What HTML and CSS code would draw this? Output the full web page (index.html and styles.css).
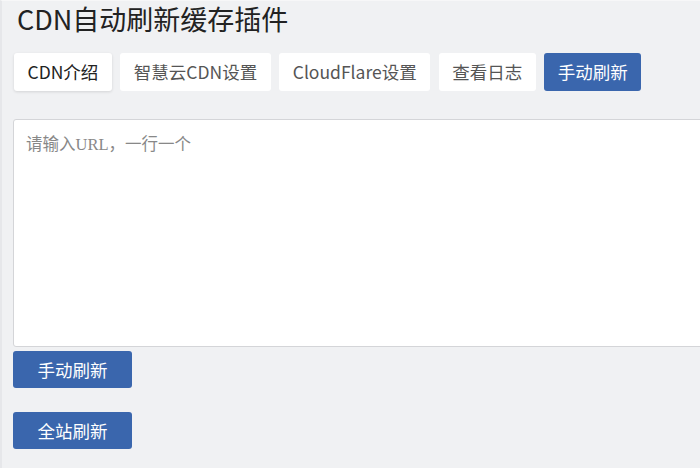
FILE: index.html
```html
<!DOCTYPE html>
<html lang="zh-CN">
<head>
  <meta charset="UTF-8">
  <title>CDN自动刷新缓存插件</title>
  <link rel="stylesheet" href="styles.css">
</head>
<body>
  <div class="wrap">
    <h1>CDN自动刷新缓存插件</h1>

    <div class="tabs">
      <a class="tab tab-hover">CDN介绍</a>
      <a class="tab">智慧云CDN设置</a>
      <a class="tab">CloudFlare设置</a>
      <a class="tab">查看日志</a>
      <a class="tab tab-active">手动刷新</a>
    </div>

    <textarea class="urls" placeholder="请输入URL，一行一个"></textarea>
    <button class="btn">手动刷新</button>
    <button class="btn btn-all">全站刷新</button>
  </div>
</body>
</html>
```

FILE: styles.css
```css
html, body {
  margin: 0;
  background: #f0f1f3;
}
body {
  font-family: "Noto Sans CJK SC", "Noto Sans", sans-serif;
  color: #333;
  overflow: hidden;
}
.wrap {
  border-left: 2px solid #e6e7ea;
  border-top: 1px solid #f7f7f8;
  padding: 0 0 0 11px;
  min-height: 468px;
}
h1 {
  font-size: 27px;
  font-weight: 400;
  color: #222;
  margin: 0;
  padding: 0 0 0 4px;
  line-height: 36px;
}
.tabs {
  display: flex;
  gap: 8.5px;
  margin: 16px 0 28px 1px;
}
.tab {
  display: block;
  background: #fff;
  color: #555;
  font-size: 17.5px;
  line-height: 38px;
  height: 38px;
  padding: 0 13.5px;
  border-radius: 3px;
}
.tab-hover {
  color: #222;
  box-shadow: 0 1px 3px rgba(0, 0, 0, 0.12);
}
.tab-active {
  background: #3a66ad;
  color: #fff;
}
.urls {
  display: block;
  box-sizing: border-box;
  width: 720px;
  height: 228px;
  margin: 0;
  padding: 11px 12px;
  border: 1px solid #d4d5d8;
  border-radius: 3px;
  background: #fff;
  font-family: "Liberation Serif", "Noto Sans CJK SC", serif;
  font-size: 16.5px;
  resize: none;
}
.urls::placeholder {
  color: #888;
}
.btn {
  display: block;
  width: 119px;
  height: 37px;
  margin: 4px 0 0;
  border: 0;
  border-radius: 3px;
  background: #3a66ad;
  color: #fff;
  font-family: "Noto Sans CJK SC", sans-serif;
  font-size: 17.5px;
  padding: 0;
}
.btn-all {
  margin-top: 24px;
}
```
